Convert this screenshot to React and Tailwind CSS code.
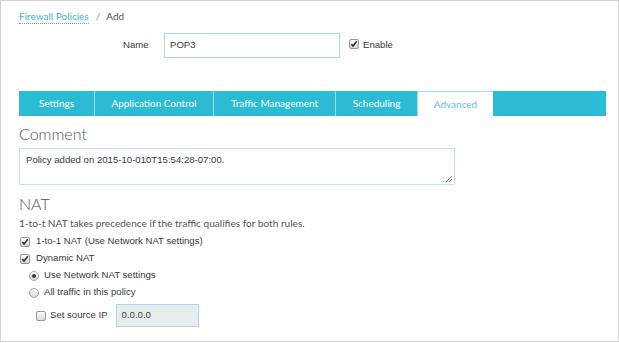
import React from "react";

const ARIAL = { fontFamily: '"Liberation Sans", Arial, sans-serif' };

function Check({ checked }) {
  return (
    <span className="inline-flex w-[10px] h-[10px] shrink-0 items-center justify-center rounded-[2px] border border-[#959595] bg-linear-to-b from-[#ffffff] to-[#d9d9d9]">
      {checked && (
        <svg width="8" height="8" viewBox="0 0 8 8">
          <path d="M1.3 4.1 L3.1 6.1 L6.8 1.3" stroke="#333" strokeWidth="1.6" fill="none" />
        </svg>
      )}
    </span>
  );
}

function Radio({ checked }) {
  return (
    <span className="inline-flex w-[10px] h-[10px] shrink-0 items-center justify-center rounded-full border border-[#a8a8a8] bg-linear-to-b from-[#ffffff] to-[#d6d6d6]">
      {checked && <span className="block w-[4px] h-[4px] rounded-full bg-[#3a3a3a]" />}
    </span>
  );
}

const tabs = [
  { label: "Settings", w: "w-[76px]" },
  { label: "Application Control", w: "w-[119px]" },
  { label: "Traffic Management", w: "w-[122px]" },
  { label: "Scheduling", w: "w-[82px]" },
];

export default function App() {
  return (
    <div className="w-[619px] h-[342px] border border-[#d2d2d2] bg-white overflow-hidden pl-[18px] text-[#444]">
      {/* Breadcrumb */}
      <div className="mt-[9px] flex items-start text-[10px] leading-[12px]" style={{ fontFamily: "Lato, sans-serif" }}>
        <span className="text-[#46b3cd] border-b border-dotted border-[#46b3cd] pb-[1px]">Firewall Policies</span>
        <span className="ml-[7px] text-[#999]">/</span>
        <span className="ml-[6px] text-[#555]">Add</span>
      </div>

      {/* Name row */}
      <div className="mt-[9px] flex items-center h-[25px] text-[9.6px]" style={ARIAL}>
        <span className="ml-[104px] w-[41px] text-[#3a3a3a]">Name</span>
        <div className="w-[176px] h-[25px] border border-[#a8d8e4] flex items-center pl-[5px] text-[#3a3a3a]">POP3</div>
        <span className="ml-[9px]"><Check checked /></span>
        <span className="ml-[4px] text-[#3a3a3a]">Enable</span>
      </div>

      {/* Tabs */}
      <div className="mt-[33px] flex h-[25px] w-[587px] bg-[#2bbbd5] text-[10px]" style={{ fontFamily: "Lato, sans-serif" }}>
        {tabs.map((t) => (
          <div key={t.label} className={`${t.w} h-full flex items-center justify-center text-white border-r border-[#9ddce8]`}>
            {t.label}
          </div>
        ))}
        <div className="w-[75px] h-full flex items-center justify-center bg-white text-[#5ebfd8] border-t border-[#9ddce8]">
          Advanced
        </div>
        <div className="flex-1 h-full" />
      </div>

      {/* Comment */}
      <div className="pt-[8px] text-[16px] leading-[20px] font-light text-[#555]" style={{ fontFamily: "Lato, sans-serif" }}>
        Comment
      </div>
      <div className="relative mt-[4px] w-[436px] h-[37px] border border-[#c3e3ea] px-[6px] pt-[5px] text-[9.6px] leading-[12px] text-[#3a3a3a]" style={ARIAL}>
        Policy added on 2015-10-010T15:54:28-07:00.
        <svg className="absolute right-[1px] bottom-[1px]" width="8" height="8" viewBox="0 0 8 8">
          <path d="M7 1 L1 7 M7 4 L4 7" stroke="#777" strokeWidth="1" />
        </svg>
      </div>

      {/* NAT */}
      <div className="pt-[9px] text-[16px] leading-[20px] font-light text-[#555]" style={{ fontFamily: "Lato, sans-serif" }}>
        NAT
      </div>
      <div className="mt-[2px] text-[10.1px] leading-[14px] text-[#555]" style={{ fontFamily: "Lato, sans-serif" }}>
        1-to-t NAT takes precedence if the traffic qualifies for both rules.
      </div>

      <div className="mt-[3px] text-[9.6px] text-[#3a3a3a]" style={ARIAL}>
        <div className="h-[17px] flex items-center pl-[1px]">
          <Check checked />
          <span className="ml-[6px]">1-to-1 NAT (Use Network NAT settings)</span>
        </div>
        <div className="h-[17px] flex items-center pl-[1px]">
          <Check checked />
          <span className="ml-[6px]">Dynamic NAT</span>
        </div>
        <div className="h-[17px] flex items-center pl-[10px]">
          <Radio checked />
          <span className="ml-[5px]">Use Network NAT settings</span>
        </div>
        <div className="h-[17px] flex items-center pl-[10px]">
          <Radio />
          <span className="ml-[5px]">All traffic in this policy</span>
        </div>
        <div className="mt-[3px] h-[23px] flex items-center pl-[17px]">
          <Check />
          <span className="ml-[4px]">Set source IP</span>
          <div className="ml-[8px] w-[83px] h-[23px] border border-[#a8d8e4] bg-[#e7edef] flex items-center pl-[5px]">0.0.0.0</div>
        </div>
      </div>
    </div>
  );
}
